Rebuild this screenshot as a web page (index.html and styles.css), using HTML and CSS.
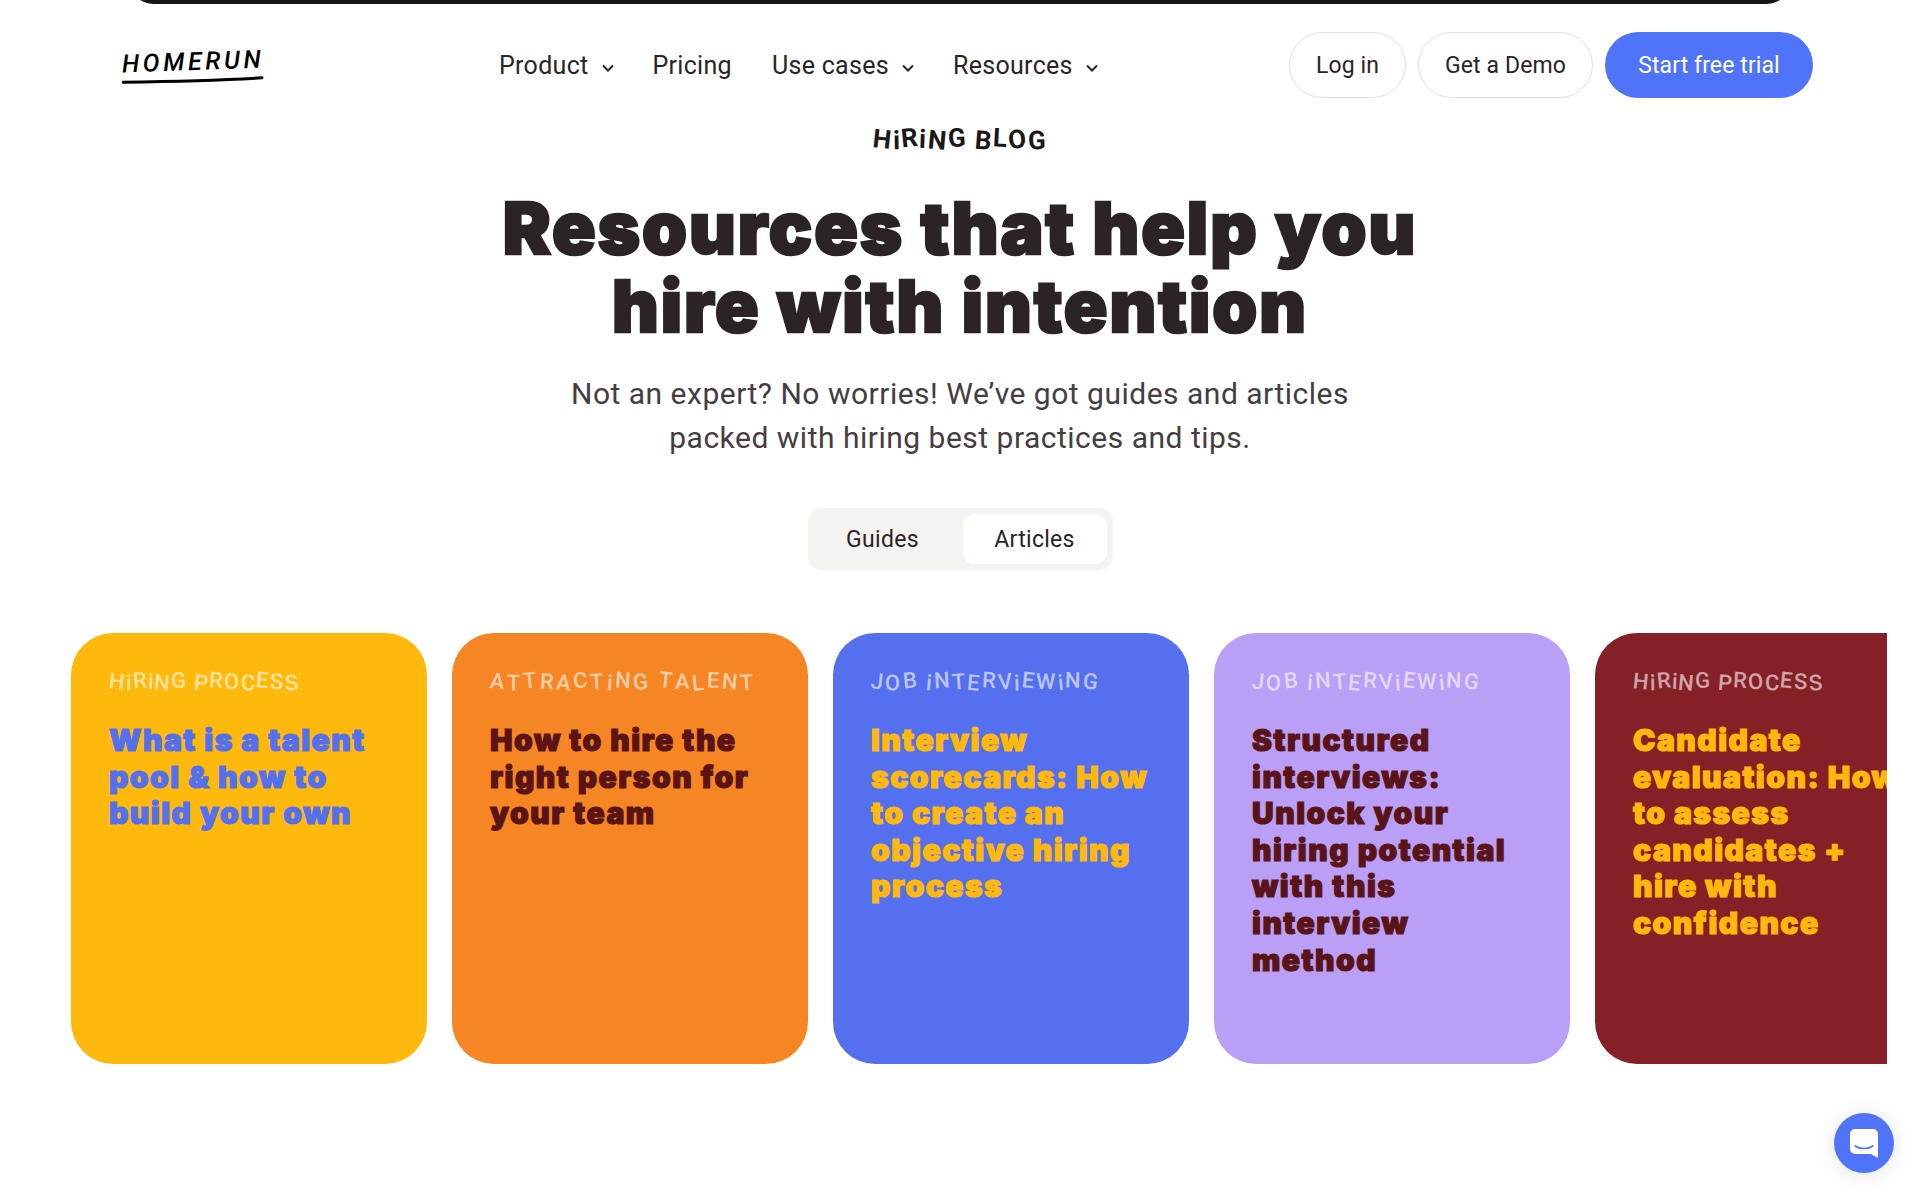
FILE: index.html
```html
<!DOCTYPE html>
<html lang="en">
<head>
    <meta charset="UTF-8">
    <title>Homerun - Hiring blog</title>
    <link rel="stylesheet" href="styles.css">
    <script src="script.js" defer></script>
</head>
<body>
    <div class="top-bar"></div>

    <header class="header">
        <a class="logo" href="#">
            <span class="logo-text">HOMERUN</span>
            <svg class="logo-line" width="142" height="8" viewBox="0 0 142 8"><path d="M1 6.2C40 5.6 95 4.4 140 1.8" fill="none" stroke="#000" stroke-width="3" stroke-linecap="round"/></svg>
        </a>
        <nav class="nav">
            <a href="#">Product <svg class="chevron" width="14" height="9" viewBox="0 0 14 9"><path d="M2 1.5 7 6.5l5-5" fill="none" stroke="#2b2325" stroke-width="2"/></svg></a>
            <a href="#">Pricing</a>
            <a href="#">Use cases <svg class="chevron" width="14" height="9" viewBox="0 0 14 9"><path d="M2 1.5 7 6.5l5-5" fill="none" stroke="#2b2325" stroke-width="2"/></svg></a>
            <a href="#">Resources <svg class="chevron" width="14" height="9" viewBox="0 0 14 9"><path d="M2 1.5 7 6.5l5-5" fill="none" stroke="#2b2325" stroke-width="2"/></svg></a>
        </nav>
        <div class="actions">
            <a class="btn btn-outline btn-login" href="#">Log in</a>
            <a class="btn btn-outline btn-demo" href="#">Get a Demo</a>
            <a class="btn btn-primary" href="#">Start free trial</a>
        </div>
    </header>

    <section class="hero">
        <div class="eyebrow hand">HiRiNG BLOG</div>
        <h1 class="title">Resources that help you<br>hire with intention</h1>
        <p class="subtitle">Not an expert? No worries! We’ve got guides and articles<br>packed with hiring best practices and tips.</p>
        <div class="tabs">
            <a class="tab" href="#">Guides</a>
            <a class="tab tab-active" href="#">Articles</a>
        </div>
    </section>

    <section class="cards">
        <a class="card card-yellow" href="#">
            <div class="card-tag hand">HiRiNG PROCESS</div>
            <h2 class="card-title">What is a talent pool &amp; how to build your own</h2>
        </a>
        <a class="card card-orange" href="#">
            <div class="card-tag card-tag-wide hand">ATTRACTiNG TALENT</div>
            <h2 class="card-title">How to hire the right person for your team</h2>
        </a>
        <a class="card card-blue" href="#">
            <div class="card-tag card-tag-mid hand">JOB iNTERViEWiNG</div>
            <h2 class="card-title">Interview scorecards: How to create an objective hiring process</h2>
        </a>
        <a class="card card-purple" href="#">
            <div class="card-tag card-tag-mid hand">JOB iNTERViEWiNG</div>
            <h2 class="card-title">Structured interviews: Unlock your hiring potential with this interview method</h2>
        </a>
        <a class="card card-maroon" href="#">
            <div class="card-tag hand">HiRiNG PROCESS</div>
            <h2 class="card-title">Candidate evaluation: How to assess candidates + hire with confidence</h2>
        </a>
    </section>

    <button class="chat-button">
        <svg width="28" height="29" viewBox="0 0 28 29"><path d="M5 0h18a5 5 0 0 1 5 5v24l-7-4H5a5 5 0 0 1-5-5V5a5 5 0 0 1 5-5z" fill="#fff"/><path d="M5 17c5 3.4 13 3.4 18 0" fill="none" stroke="#4f74f9" stroke-width="1.6" stroke-linecap="round"/></svg>
    </button>
</body>
</html>
```

FILE: styles.css
```css
body {
    font-family: "Roboto", "Liberation Sans", sans-serif;
    color: #2b2325;
    background-color: white;
    margin: 0;
    padding: 0;
    height: 1200px;
    overflow: hidden;
}
a {
    color: inherit;
    text-decoration: none;
}
.top-bar {
    height: 30px;
    margin: -26px 128px 0 128px;
    background-color: #141414;
    border-radius: 0 0 26px 26px;
}

/* Header */
.header {
    display: flex;
    align-items: center;
    height: 66px;
    padding: 28px 107px 0 122px;
}
.logo {
    display: flex;
    flex-direction: column;
    width: 142px;
    margin-top: 2px;
    color: black;
}
.logo-text {
    font-family: "Roboto", sans-serif;
    font-style: italic;
    font-weight: 500;
    font-size: 25px;
    line-height: 26px;
    letter-spacing: 3.6px;
    transform: rotate(-2deg);
}
.logo-line {
    margin-top: 1px;
}
.nav {
    display: flex;
    align-items: center;
    gap: 40px;
    margin-left: 235px;
    font-size: 25px;
    letter-spacing: 0.3px;
}
.chevron {
    margin: 0 -2.5px 0 6px;
    vertical-align: 1px;
}
.actions {
    display: flex;
    gap: 12px;
    margin-left: auto;
}
.btn {
    display: flex;
    align-items: center;
    justify-content: center;
    box-sizing: border-box;
    height: 66px;
    border-radius: 33px;
    font-size: 23px;
    letter-spacing: 0.1px;
}
.btn-outline {
    border: 1px solid #e0e0e0;
}
.btn-login {
    width: 117px;
}
.btn-demo {
    width: 175px;
}
.btn-primary {
    width: 208px;
    background-color: #4f74f9;
    color: white;
}

/* Hand lettered labels, letters get wrapped and tilted by script.js */
.hand span {
    display: inline-block;
    white-space: pre;
}

/* Hero */
.hero {
    display: flex;
    flex-direction: column;
    align-items: center;
    text-align: center;
}
.eyebrow {
    margin-top: 26px;
    font-size: 26px;
    font-weight: 700;
    line-height: 30px;
    letter-spacing: 1.5px;
    color: #1c1719;
}
.title {
    margin: 35px 0 0 0;
    font-family: "Inter", sans-serif;
    font-size: 72px;
    font-weight: 900;
    line-height: 78px;
    letter-spacing: 2px;
    -webkit-text-stroke: 2.5px #2b2325;
}
.subtitle {
    margin: 27px 0 0 0;
    font-size: 30px;
    line-height: 44px;
    letter-spacing: 0.5px;
    color: #453d3f;
}
.tabs {
    display: flex;
    align-items: center;
    justify-content: space-between;
    box-sizing: border-box;
    width: 305px;
    height: 62px;
    margin-top: 48px;
    padding: 6px;
    background-color: #f3f3ef;
    border-radius: 14px;
}
.tab {
    display: flex;
    align-items: center;
    justify-content: center;
    width: 138px;
    height: 50px;
    font-size: 23px;
    letter-spacing: 0.3px;
    border-radius: 12px;
}
.tab-active {
    width: 144px;
    background-color: white;
}

/* Cards */
.cards {
    display: flex;
    gap: 25px;
    width: 1816px;
    margin: 63px 0 0 71px;
    overflow: hidden;
}
.card {
    flex: none;
    box-sizing: border-box;
    width: 356px;
    height: 431px;
    padding: 34px 30px 0 38px;
    border-radius: 42px;
}
.card-tag {
    font-size: 22px;
    font-weight: 500;
    line-height: 30px;
    letter-spacing: 1.2px;
    white-space: nowrap;
    color: rgba(255, 255, 255, 0.6);
}
.card-tag-wide {
    letter-spacing: 2.7px;
}
.card-tag-mid {
    letter-spacing: 2.1px;
}
.card-title {
    margin: 25px 0 0 0;
    font-family: "Inter", sans-serif;
    font-size: 30px;
    font-weight: 900;
    line-height: 36.6px;
    letter-spacing: 1.5px;
    -webkit-text-stroke: 1.2px currentColor;
}
.card-yellow {
    background-color: #ffb80c;
    color: #5570ee;
}
.card-orange {
    background-color: #f68524;
    color: #5a1418;
}
.card-blue {
    background-color: #5570ee;
    color: #ffb80c;
}
.card-purple {
    background-color: #b9a0f6;
    color: #5a1418;
}
.card-maroon {
    padding-right: 40px;
    background-color: #862027;
    color: #ffb80c;
}

/* Chat bubble */
.chat-button {
    position: fixed;
    right: 26px;
    bottom: 27px;
    display: flex;
    align-items: center;
    justify-content: center;
    width: 60px;
    height: 60px;
    border: none;
    border-radius: 50%;
    background-color: #4f74f9;
    box-shadow: 0 2px 20px rgba(0, 0, 0, 0.12);
}
```

FILE: script.js
```js
// wobble the letters of the hand lettered labels
document.querySelectorAll(".hand").forEach(function(label) {
    var text = label.textContent;
    label.textContent = "";
    text.split("").forEach(function(letter, i) {
        var span = document.createElement("span");
        span.textContent = letter;
        span.style.transform = "translateY(" + (Math.sin(i * 2.1) * 1.5).toFixed(1) + "px) rotate(" + (Math.cos(i * 1.7) * 6).toFixed(1) + "deg)";
        label.appendChild(span);
    });
});
```
